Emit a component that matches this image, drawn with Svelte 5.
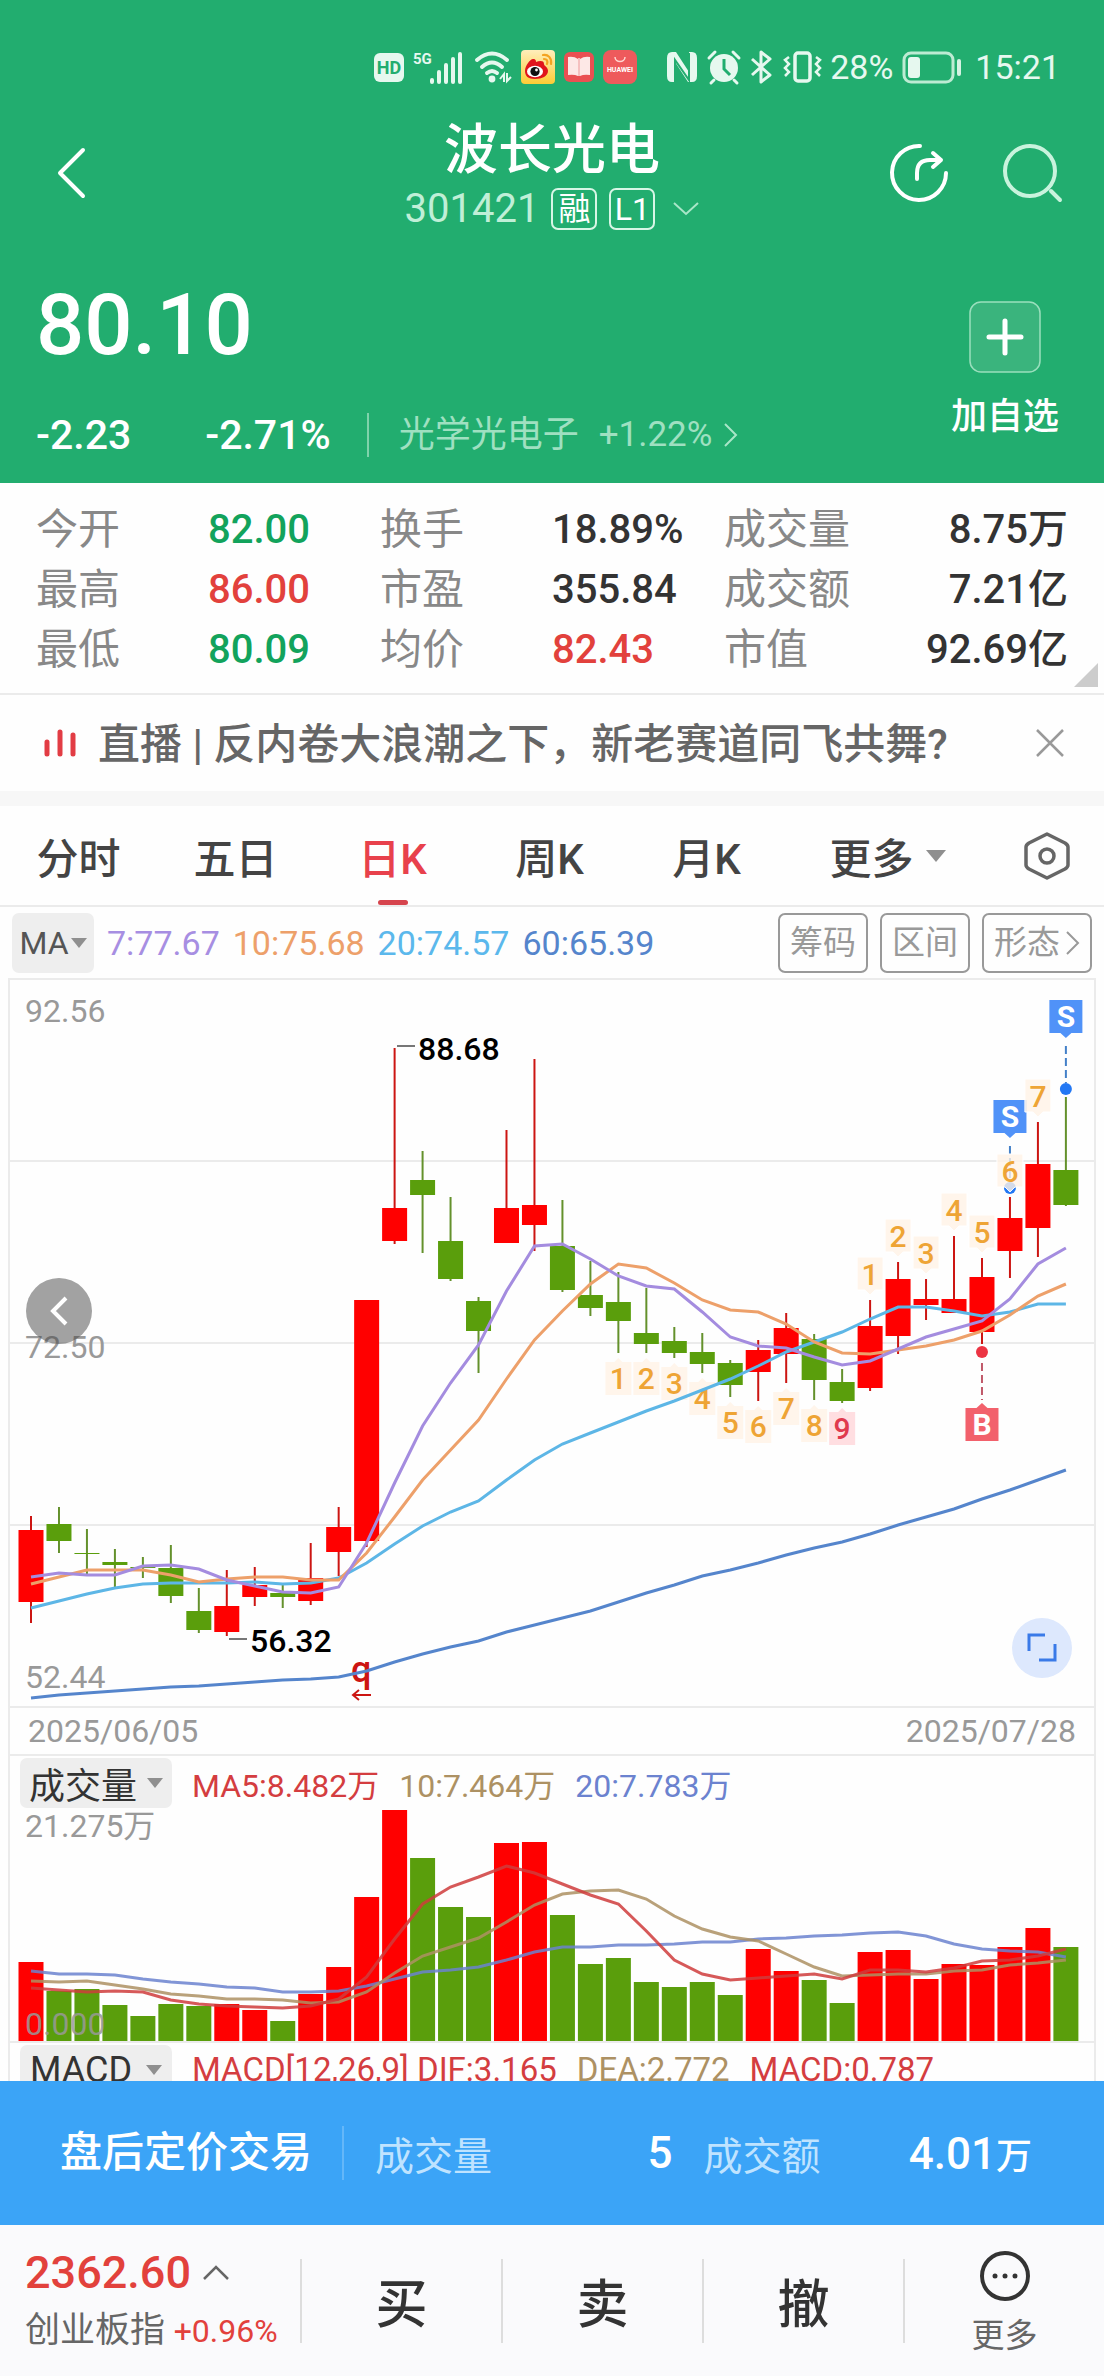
<script>
	const RED = '#ff0000'
	const GREEN = '#5a9e0c'
	const step = 27.97
	const xAt = (i) => 21 + i * step

	const stats = [
		[['今开', '82.00', 'down'], ['换手', '18.89%', ''], ['成交量', '8.75万', '']],
		[['最高', '86.00', 'up'], ['市盈', '355.84', ''], ['成交额', '7.21亿', '']],
		[['最低', '80.09', 'down'], ['均价', '82.43', 'up'], ['市值', '92.69亿', '']]
	]

	const tabs = ['分时', '五日', '日K', '周K', '月K']
	let activeTab = '日K'

	// high, body top, body bottom, low, 1 = up day
	const candles = [
		[536, 550, 622, 643, 1], [527, 544, 561, 573, 0], [549, 573, 574, 595, 0], [569, 582, 585, 608, 0],
		[577, 587, 588, 598, 0], [565, 588, 616, 623, 0], [608, 631, 650, 653, 0], [590, 626, 652, 656, 1],
		[587, 605, 617, 626, 1], [605, 613, 617, 628, 0], [563, 598, 621, 625, 1], [527, 547, 572, 596, 1],
		[320, 320, 561, 567, 1], [68, 228, 261, 264, 1], [171, 200, 215, 273, 0], [217, 261, 299, 301, 0],
		[317, 321, 351, 393, 0], [150, 228, 263, 263, 1], [79, 225, 245, 271, 1], [220, 266, 310, 312, 0],
		[281, 315, 328, 336, 0], [292, 322, 341, 373, 0], [308, 353, 364, 373, 0], [347, 361, 373, 378, 0],
		[353, 372, 384, 393, 0], [380, 383, 405, 417, 0], [360, 370, 392, 421, 1], [333, 348, 374, 403, 1],
		[354, 359, 400, 420, 0], [389, 402, 421, 423, 0], [320, 346, 408, 411, 1], [282, 299, 356, 374, 1],
		[299, 319, 325, 340, 1], [256, 319, 333, 333, 1], [278, 297, 352, 364, 1], [217, 238, 271, 298, 1],
		[142, 184, 248, 277, 1], [117, 190, 225, 226, 0]
	]

	const priceLines = [
		{ color: '#5585cc', data: [718, 715, 713, 711, 709, 707, 706, 704, 702, 700, 699, 697, 691, 682, 674, 667, 661, 652, 645, 638, 631, 622, 613, 605, 596, 590, 583, 575, 568, 562, 554, 545, 537, 529, 519, 510, 500, 490] },
		{ color: '#5db6e6', data: [628, 621, 614, 608, 604, 603, 603, 603, 602, 604, 603, 598, 583, 564, 546, 532, 521, 500, 480, 464, 453, 442, 431, 421, 410, 399, 386, 372, 362, 352, 339, 327, 327, 331, 336, 332, 324, 324] },
		{ color: '#eda06a', data: [604, 597, 590, 590, 590, 595, 602, 599, 597, 597, 600, 600, 573, 537, 500, 470, 440, 399, 360, 331, 304, 284, 288, 303, 320, 330, 332, 344, 362, 373, 374, 370, 366, 360, 351, 335, 316, 304] },
		{ color: '#a48cdf', data: [597, 593, 595, 595, 586, 585, 589, 600, 606, 612, 613, 607, 563, 503, 446, 403, 365, 311, 266, 264, 279, 296, 306, 309, 332, 357, 366, 368, 377, 385, 381, 369, 357, 349, 341, 319, 284, 268] }
	]

	const volumes = [79, 50, 52, 36, 25, 37, 35, 37, 31, 20, 47, 74, 144, 231, 183, 134, 124, 198, 199, 126, 77, 83, 59, 54, 59, 46, 92, 70, 61, 38, 89, 91, 62, 77, 76, 94, 113, 94]

	const volumeLines = [
		{ color: '#6b82cf', data: [70, 67, 67, 66, 62, 59, 57, 54, 53, 49, 49, 50, 55, 62, 69, 71, 74, 81, 89, 94, 94, 96, 96, 97, 99, 99, 102, 103, 105, 106, 108, 109, 105, 97, 92, 90, 89, 84] },
		{ color: '#ad9163', data: [60, 59, 60, 56, 52, 47, 45, 42, 42, 41, 38, 39, 49, 68, 85, 94, 103, 119, 136, 147, 150, 151, 142, 125, 112, 104, 100, 87, 74, 65, 66, 67, 67, 70, 71, 76, 78, 81] },
		{ color: '#cf3c3c', data: [53, 51, 49, 50, 49, 41, 37, 35, 34, 33, 35, 42, 64, 102, 137, 154, 164, 175, 168, 157, 146, 137, 110, 81, 67, 61, 63, 65, 67, 62, 71, 71, 69, 73, 80, 81, 85, 92] }
	]

	// nine-turn counts, drawn under the lows and over the highs
	const countsBelow = [1, 2, 3, 4, 5, 6, 7, 8, 9].map((n, k) => ({ n, i: 21 + k, y: candles[21 + k][3] + 9 }))
	const countsAbove = [1, 2, 3, 4, 5, 6, 7].map((n, k) => ({ n, i: 30 + k, y: candles[30 + k][0] - 43 }))

	const sells = [
		{ i: 35, y: 120, dot: 208 },
		{ i: 37, y: 20, dot: 109 }
	]

	const points = (data, base = 0) =>
		data.map((v, i) => `${xAt(i).toFixed(1)},${base ? base - v : v}`).join(' ')
</script>

<div class="app">
	<header>
		<div class="status">
			<svg width="30" height="34" viewBox="0 0 30 34">
				<rect y="3" width="30" height="29" rx="6" fill="#e6f8ef" />
				<text x="15" y="24" text-anchor="middle" font-size="18" font-weight="700" fill="#22ad6f">HD</text>
			</svg>
			<svg class="signal" width="52" height="34" viewBox="0 0 52 34">
				<text x="0" y="14" font-size="15" font-weight="700" fill="#e6f8ef">5G</text>
				<path d="M19 30v2M26 22v10M33 15v17M40 9v23M47 4v28" stroke="#e6f8ef" stroke-width="4" stroke-linecap="round" />
			</svg>
			<svg class="wifi" width="38" height="34" viewBox="0 0 38 34">
				<g fill="none" stroke="#e6f8ef" stroke-width="4" stroke-linecap="round">
					<path d="M3 10Q18-3 33 10" />
					<path d="M8 17Q18 8 28 17" />
					<path d="M13 23Q18 19 23 23" />
				</g>
				<circle cx="18" cy="29" r="3.4" fill="#e6f8ef" />
				<path d="M26 29l4-5v8M33 23v8l4-4" fill="none" stroke="#e6f8ef" stroke-width="2" />
			</svg>
			<svg width="34" height="34" viewBox="0 0 34 34">
				<defs>
					<linearGradient id="weibo" x2="0" y2="1">
						<stop stop-color="#ffeebb" />
						<stop offset="1" stop-color="#fdcc35" />
					</linearGradient>
				</defs>
				<rect width="34" height="34" rx="4" fill="url(#weibo)" />
				<path d="M12 9c3 0 3 2 3 3 3-1 8-2 8 2 0 2 4 3 4 7 0 5-6 8-13 8S4 26 4 21c0-5 5-12 8-12z" fill="#e0151c" />
				<ellipse cx="14" cy="21.500" rx="8" ry="5.800" fill="#fff" />
				<circle cx="14" cy="21.500" r="4.600" fill="#111" />
				<circle cx="15.500" cy="20" r="1.400" fill="#fff" />
				<path d="M22 5c5-1 9 3 8 9M23 9c3 0 4 2 3 5" fill="none" stroke="#f4a321" stroke-width="2.200" stroke-linecap="round" />
			</svg>
			<svg width="30" height="34" viewBox="0 0 30 34">
				<rect y="2" width="30" height="30" rx="6" fill="#ea5052" />
				<path d="M4 7q6-1 10 2v17q-4-2-10-1zM26 7q-6-1-10 2v17q4-2 10-1z" fill="#fde8e6" />
				<path d="M15 8v18" stroke="#f5c0bf" stroke-width="2" />
			</svg>
			<svg width="34" height="34" viewBox="0 0 34 34">
				<rect width="34" height="34" rx="8" fill="#ee5a5c" />
				<path d="M12 7c0 6 10 6 10 0" fill="none" stroke="#ffd5d0" stroke-width="1.500" />
				<text x="17" y="22" text-anchor="middle" font-size="7" font-weight="700" fill="#fff">HUAWEI</text>
			</svg>
			<svg class="nfc" width="32" height="34" viewBox="0 0 32 34">
				<path d="M6 2h4l13 20V2h3q5 0 5 6v18q0 6-5 6h-4L9 12v20H6q-5 0-5-6V8q0-6 5-6z" fill="#e6f8ef" />
				<path d="M9 32V10l14 20V3" fill="none" stroke="#22ad6f" stroke-width="2" />
			</svg>
			<svg width="34" height="34" viewBox="0 0 34 34">
				<circle cx="17" cy="18" r="14" fill="#e6f8ef" />
				<path d="M2 8l6-6M32 8l-6-6M7 30l-3 3M27 30l3 3" stroke="#e6f8ef" stroke-width="3" stroke-linecap="round" />
				<path d="M17 9v10l6 6" fill="none" stroke="#22ad6f" stroke-width="3" />
			</svg>
			<svg width="24" height="34" viewBox="0 0 24 34">
				<path d="M2 9l18 16-9 7V2l9 7L2 25" fill="none" stroke="#e6f8ef" stroke-width="3" stroke-linejoin="round" />
			</svg>
			<svg width="38" height="34" viewBox="0 0 38 34">
				<rect x="12" y="3" width="15" height="28" rx="3" fill="none" stroke="#e6f8ef" stroke-width="3.500" />
				<path d="M6 7l-4 3 4 4-4 4 4 4-4 4M33 7l4 3-4 4 4 4-4 4 4 4" fill="none" stroke="#e6f8ef" stroke-width="2.500" />
			</svg>
			<span>28%</span>
			<svg width="60" height="34" viewBox="0 0 60 34">
				<rect x="2" y="3" width="49" height="29" rx="7" fill="none" stroke="#bdebd3" stroke-width="3" />
				<rect x="6" y="7" width="12" height="21" rx="3" fill="#e6f8ef" />
				<path d="M57 11v13" stroke="#d5f3e3" stroke-width="4" stroke-linecap="round" />
			</svg>
			<span class="clock">15:21</span>
		</div>

		<div class="titlebar">
			<button class="icon back" aria-label="返回">
				<svg width="32" height="52" viewBox="0 0 32 52">
					<path d="M27 3L4 26l23 23" fill="none" stroke="#fff" stroke-width="4" stroke-linecap="round" stroke-linejoin="round" />
				</svg>
			</button>
			<div class="title">
				<h1>波长光电</h1>
				<button class="code">
					<span>301421</span>
					<i>融</i>
					<i>L1</i>
					<svg width="26" height="16" viewBox="0 0 26 16">
						<path d="M1 2l12 11L25 2" fill="none" stroke="#a9e6c8" stroke-width="2" />
					</svg>
				</button>
			</div>
			<div class="tools">
				<button class="icon" aria-label="分享">
					<svg width="60" height="60" viewBox="0 0 60 60" fill="none" stroke="#fff" stroke-width="4" stroke-linecap="round" stroke-linejoin="round">
						<path d="M31 3A27 27 0 1 0 57 30" />
						<path d="M28 36v-6q0-13 13-13h11M44 10l8 7-8 7" />
					</svg>
				</button>
				<button class="icon" aria-label="搜索">
					<svg width="60" height="60" viewBox="0 0 60 60" fill="none" stroke="#c9f3dd" stroke-width="4" stroke-linecap="round">
						<circle cx="28" cy="28" r="25" />
						<path d="M49 48l9 9" />
					</svg>
				</button>
			</div>
		</div>

		<div class="quote">
			<div>
				<strong>80.10</strong>
				<p>
					<span>-2.23</span>
					<span class="pct">-2.71%</span>
					<a href="#sector">光学光电子 <em>+1.22%</em>
						<svg width="14" height="24" viewBox="0 0 14 24">
							<path d="M1 1l11 11L1 23" fill="none" stroke="#a9e6c8" stroke-width="2" />
						</svg>
					</a>
				</p>
			</div>
			<button class="add">
				<svg width="72" height="72" viewBox="0 0 72 72">
					<rect x="1" y="1" width="70" height="70" rx="11" fill="#3ab47d" stroke="#9adfbd" stroke-width="1.500" />
					<path d="M36 20v32M20 36h32" stroke="#fff" stroke-width="5" stroke-linecap="round" />
				</svg>
				加自选
			</button>
		</div>
	</header>

	<main>
		<section class="stats">
			<table>
				<tbody>
					{#each stats as row}
						<tr>
							{#each row as [label, value, tone]}
								<th scope="row">{label}</th>
								<td class={tone}>{value}</td>
							{/each}
						</tr>
					{/each}
				</tbody>
			</table>
		</section>

		<section class="live">
			<svg width="32" height="30" viewBox="0 0 32 30">
				<path d="M3 14v12M16 4v22M29 7v19" stroke="#e23c44" stroke-width="5" stroke-linecap="round" />
			</svg>
			<a href="#live">直播 | 反内卷大浪潮之下，新老赛道同飞共舞?</a>
			<button class="icon" aria-label="关闭">
				<svg width="28" height="28" viewBox="0 0 28 28">
					<path d="M1 1l26 26M27 1L1 27" stroke="#999" stroke-width="2.500" />
				</svg>
			</button>
		</section>

		<nav class="tabs">
			{#each tabs as tab}
				<button class:active={tab === activeTab} on:click={() => (activeTab = tab)}>{tab}</button>
			{/each}
			<button class="more">更多<i class="caret"></i></button>
			<button class="icon" aria-label="设置">
				<svg width="46" height="48" viewBox="0 0 46 48" fill="none" stroke="#666" stroke-width="3.500" stroke-linejoin="round">
					<path d="M23 2l18 9q3 2 3 4v18q0 2-3 4l-18 9-18-9q-3-2-3-4V15q0-2 3-4z" />
					<circle cx="23" cy="24" r="7" />
				</svg>
			</button>
		</nav>

		<div class="ma">
			<button class="chip">MA<i class="caret"></i></button>
			<span class="ma7">7:77.67</span>
			<span class="ma10">10:75.68</span>
			<span class="ma20">20:74.57</span>
			<span class="ma60">60:65.39</span>
			<div class="modes">
				<button>筹码</button>
				<button>区间</button>
				<button>形态
					<svg width="14" height="24" viewBox="0 0 14 24">
						<path d="M1 1l11 11L1 23" fill="none" stroke="#999" stroke-width="2" />
					</svg>
				</button>
			</div>
		</div>

		<div class="charts">
			<div class="price">
				<svg viewBox="0 0 1084 726">
					<path d="M0 181h1084M0 363h1084M0 545h1084" stroke="#ebebeb" stroke-width="2" />
					<g class="scale">
						<text x="15" y="42">92.56</text>
						<text x="15" y="378">72.50</text>
						<text x="15" y="708">52.44</text>
					</g>

					{#each candles as [high, top, bottom, low, up], i}
						<path d="M{xAt(i)} {high}V{low}" stroke={up ? '#cc1512' : '#64912c'} stroke-width="2" />
						<rect x={xAt(i) - 12.5} y={top} width="25" height={bottom - top} fill={up ? RED : GREEN} />
					{/each}

					{#each countsBelow as { n, i, y }}
						<g class="count" class:nine={n === 9}>
							<path d="M{xAt(i) - 13} {y}h9l4-4 4 4h9v33h-26z" />
							<text x={xAt(i)} y={y + 27}>{n}</text>
						</g>
					{/each}

					<text class="mark" x="341" y="702">q</text>
					<path d="M361 715h-18M349 710l-6 5 6 5" fill="none" stroke="#cc1512" stroke-width="2" />

					{#each priceLines as line}
						<polyline points={points(line.data)} fill="none" stroke={line.color} stroke-width="3" />
					{/each}

					{#each sells as { i, y, dot }}
						<path d="M{xAt(i)} {y + 46}V{dot - 6}" stroke="#4480c8" stroke-width="2" stroke-dasharray="8 4" />
						<circle cx={xAt(i)} cy={dot} r="6" fill="#2378f4" />
						<path d="M{xAt(i) - 16.5} {y}h33v33h-11l-5.500 5-5.500-5h-11z" fill="#5092f8" />
						<text class="trade" x={xAt(i)} y={y + 27}>S</text>
					{/each}

					<path d="M{xAt(34)} 383V420" stroke="#c0596a" stroke-width="2" stroke-dasharray="8 4" />
					<circle cx={xAt(34)} cy="372" r="6" fill="#ec3443" />
					<path d="M{xAt(34) - 16.5} 428h11l5.500-5 5.500 5h11v33h-33z" fill="#f2616c" />
					<text class="trade" x={xAt(34)} y="455">B</text>

					{#each countsAbove as { n, i, y }}
						<g class="count above">
							<path d="M{xAt(i) - 13} {y}h26v33h-8l-5 5-5-5h-8z" />
							<text x={xAt(i)} y={y + 28}>{n}</text>
						</g>
					{/each}

					<path d="M387 66h18M219 659h18" stroke="#777" stroke-width="2" />
					<g class="extreme">
						<text x="408" y="80">88.68</text>
						<text x="240" y="672">56.32</text>
					</g>
				</svg>
				<button class="round prev" aria-label="向前">
					<svg width="20" height="32" viewBox="0 0 20 32">
						<path d="M17 3L4 16l13 13" fill="none" stroke="#fff" stroke-width="4" />
					</svg>
				</button>
				<button class="round expand" aria-label="全屏">
					<svg width="30" height="30" viewBox="0 0 30 30">
						<path d="M2 18V2h16M28 11v16H12" fill="none" stroke="#3a7ae8" stroke-width="3" />
					</svg>
				</button>
			</div>

			<div class="dates">
				<time>2025/06/05</time>
				<time>2025/07/28</time>
			</div>

			<div class="legend">
				<button class="chip">成交量<i class="caret"></i></button>
				<span class="red">MA5:8.482万</span>
				<span class="tan">10:7.464万</span>
				<span class="blue">20:7.783万</span>
			</div>
			<svg class="volume" viewBox="0 0 1084 232">
				{#each volumes as v, i}
					<rect x={xAt(i) - 12.5} y={232 - v} width="25" height={v} fill={candles[i][4] ? RED : GREEN} />
				{/each}
				{#each volumeLines as line}
					<polyline points={points(line.data, 232)} fill="none" stroke={line.color} stroke-opacity="0.85" stroke-width="3" />
				{/each}
				<g class="scale">
					<text x="15" y="28">21.275万</text>
					<text x="15" y="226" fill-opacity="0.85">0.000</text>
				</g>
			</svg>

			<div class="legend macd">
				<button class="chip">MACD<i class="caret"></i></button>
				<span class="red">MACD[12,26,9] DIF:3.165</span>
				<span class="tan">DEA:2.772</span>
				<span class="red">MACD:0.787</span>
			</div>
		</div>
	</main>

	<aside>
		<b>盘后定价交易</b>
		<span class="key">成交量</span>
		<span class="val">5</span>
		<span class="key">成交额</span>
		<span class="val">4.01<small>万</small></span>
	</aside>

	<footer>
		<button class="index">
			<span class="point">2362.60
				<svg width="26" height="16" viewBox="0 0 26 16">
					<path d="M1 14L13 2l12 12" fill="none" stroke="#666" stroke-width="2.500" />
				</svg>
			</span>
			<span class="name">创业板指 <em>+0.96%</em></span>
		</button>
		<button class="act">买</button>
		<button class="act">卖</button>
		<button class="act">撤</button>
		<button class="etc">
			<svg width="52" height="52" viewBox="0 0 52 52">
				<circle cx="26" cy="26" r="23" fill="none" stroke="#333" stroke-width="4" />
				<g fill="#333">
					<circle cx="16" cy="26" r="2.500" />
					<circle cx="26" cy="26" r="2.500" />
					<circle cx="36" cy="26" r="2.500" />
				</g>
			</svg>
			更多
		</button>
	</footer>
</div>

<style>
	:global(body) {
		background: #fefefe;
	}
	.app {
		display: flex;
		flex-direction: column;
		height: 100vh;
		font-family: Roboto, "Noto Sans CJK SC", sans-serif;
		color: #333;
	}
	svg {
		display: block;
		flex: none;
		overflow: visible;
	}
	button {
		padding: 0;
		border: 0;
		background: none;
		color: inherit;
		font: inherit;
		white-space: nowrap;
	}
	a {
		color: inherit;
		text-decoration: none;
	}
	i, em {
		font-style: normal;
	}
	.icon {
		display: flex;
	}
	.caret {
		border: 8px solid transparent;
		border-top: 10px solid #8f8f8f;
		border-bottom: 0;
	}

	/* header */
	header {
		flex: none;
		background: #22ad6f;
		color: #fff;
		padding-top: 48px;
		height: 435px;
	}
	.status {
		display: flex;
		align-items: center;
		justify-content: flex-end;
		gap: 9px;
		height: 38px;
		padding-right: 44px;
		font-size: 34px;
		line-height: 38px;
		color: #e6f8ef;
	}
	.status .nfc {
		margin-left: 20px;
	}
	.status .clock {
		margin-left: 4px;
	}
	.titlebar {
		display: grid;
		grid-template-columns: 1fr auto 1fr;
		align-items: center;
		padding: 29px 42px 0;
	}
	.back {
		margin-left: 14px;
	}
	.title {
		display: flex;
		flex-direction: column;
		align-items: center;
	}
	h1 {
		margin: 0;
		font-size: 54px;
		line-height: 72px;
		font-weight: 500;
	}
	.code {
		display: flex;
		align-items: center;
		gap: 12px;
		font-size: 40px;
		line-height: 44px;
		color: #c0efd7;
	}
	.code i {
		box-sizing: border-box;
		width: 46px;
		height: 42px;
		border: 2px solid #d8f6e6;
		border-radius: 7px;
		font-size: 32px;
		line-height: 38px;
		text-align: center;
		color: #fff;
	}
	.code svg {
		margin-left: 6px;
	}
	.tools {
		display: flex;
		justify-content: flex-end;
		gap: 53px;
	}
	.quote {
		display: flex;
		justify-content: space-between;
		padding: 50px 45px 0 36px;
	}
	.quote strong {
		display: block;
		font-size: 85px;
		line-height: 88px;
		font-weight: 500;
	}
	.quote p {
		display: flex;
		align-items: center;
		margin: 44px 0 0;
		font-size: 41px;
		line-height: 44px;
		font-weight: 500;
	}
	.quote .pct {
		margin-left: 74px;
	}
	.quote a {
		display: flex;
		align-items: center;
		margin-left: 36px;
		padding-left: 30px;
		border-left: 2px solid #7fd3ab;
		font-size: 36px;
		font-weight: 400;
		color: #9fe0c1;
	}
	.quote em {
		margin: 0 12px 0 20px;
		font-size: 35px;
	}
	.add {
		display: flex;
		flex-direction: column;
		align-items: center;
		gap: 22px;
		margin-top: 20px;
		height: 138px;
		font-size: 36px;
		line-height: 44px;
		font-weight: 500;
	}

	/* content */
	main {
		flex: 1;
		min-height: 0;
		overflow: hidden;
	}
	.stats {
		position: relative;
		padding: 17px 36px 13px;
		border-bottom: 2px solid #ebebeb;
	}
	.stats::after {
		content: '';
		position: absolute;
		right: 6px;
		bottom: 6px;
		border-left: 24px solid transparent;
		border-bottom: 24px solid #ccc;
	}
	table {
		width: 100%;
		table-layout: fixed;
		border-collapse: collapse;
		font-size: 40px;
		line-height: 60px;
	}
	th, td {
		padding: 0;
		text-align: left;
		font-weight: 400;
		white-space: nowrap;
	}
	th {
		font-size: 42px;
		color: #888;
	}
	td {
		font-weight: 500;
	}
	td:last-child {
		text-align: right;
	}
	.up {
		color: #e2413c;
	}
	.down {
		color: #12a35c;
	}
	.live {
		display: flex;
		align-items: center;
		height: 96px;
		padding: 0 40px 0 44px;
		border-bottom: 15px solid #f7f7f7;
		color: #666;
	}
	.live a {
		flex: 1;
		margin-left: 22px;
		padding-top: 4px;
		font-size: 42px;
		line-height: 60px;
		font-weight: 500;
		white-space: nowrap;
	}
	.tabs {
		display: flex;
		align-items: center;
		height: 99px;
		border-bottom: 2px solid #ebebeb;
		font-size: 42px;
		font-weight: 500;
		color: #444;
	}
	.tabs button {
		position: relative;
		flex: 157;
		height: 100%;
	}
	.tabs .active {
		color: #e8414c;
	}
	.tabs .active::after {
		content: '';
		position: absolute;
		left: 50%;
		bottom: 0;
		width: 30px;
		height: 5px;
		margin-left: -15px;
		border-radius: 3px;
		background: #d6444d;
	}
	.tabs .more {
		display: flex;
		align-items: center;
		justify-content: center;
		gap: 12px;
		flex: 205;
	}
	.tabs .more .caret {
		border-width: 12px 10px 0;
	}
	.tabs .icon {
		flex: 114;
		align-items: center;
		justify-content: center;
	}
	.ma {
		display: flex;
		align-items: center;
		gap: 13px;
		height: 71px;
		padding: 0 12px;
		font-size: 34px;
		line-height: 40px;
	}
	.chip {
		display: flex;
		align-items: center;
		justify-content: center;
		border-radius: 7px;
		background: #eee;
	}
	.ma .chip {
		gap: 2px;
		width: 82px;
		height: 60px;
		font-size: 32px;
		color: #555;
	}
	.ma7 { color: #a78ee2; }
	.ma10 { color: #eda06a; }
	.ma20 { color: #5bb8ec; }
	.ma60 { color: #5585cc; }
	.modes {
		display: flex;
		gap: 12px;
		margin-left: auto;
	}
	.modes button {
		display: flex;
		align-items: center;
		gap: 6px;
		height: 60px;
		padding: 0 10px;
		border: 2px solid #999;
		border-radius: 7px;
		box-sizing: border-box;
		font-size: 33px;
		color: #999;
	}
	.charts {
		margin: 0 8px;
		border: 2px solid #ebebeb;
		border-bottom: 0;
	}
	.price {
		position: relative;
	}
	.price > svg, .volume {
		width: 100%;
	}
	.scale {
		font-size: 32px;
		fill: #999;
	}
	.extreme {
		font-size: 32px;
		font-weight: 500;
		fill: #000;
	}
	.mark {
		font-size: 36px;
		font-weight: 500;
		fill: #cc1512;
	}
	.trade {
		font-size: 30px;
		font-weight: 700;
		fill: #fff;
		text-anchor: middle;
	}
	.count {
		font-size: 30px;
		font-weight: 500;
		text-anchor: middle;
	}
	.count path {
		fill: #fff3e6;
		fill-opacity: 0.8;
	}
	.above path {
		stroke: #fff;
		stroke-width: 1;
	}
	.count text {
		fill: #eea435;
	}
	.nine path {
		fill: #ffd6da;
	}
	.nine text {
		fill: #e0394d;
	}
	.round {
		position: absolute;
		display: flex;
		align-items: center;
		justify-content: center;
		border-radius: 50%;
	}
	.prev {
		left: 16px;
		top: 41%;
		width: 66px;
		height: 66px;
		background: rgba(70, 70, 70, 0.5);
	}
	.expand {
		right: 22px;
		bottom: 28px;
		width: 60px;
		height: 60px;
		background: #dde8fd;
	}
	.dates {
		display: flex;
		justify-content: space-between;
		padding: 0 18px;
		border: solid #ebebeb;
		border-width: 2px 0;
		font-size: 32px;
		line-height: 46px;
		color: #999;
	}
	.legend {
		display: flex;
		align-items: center;
		gap: 20px;
		height: 53px;
		padding-left: 10px;
		font-size: 32px;
		white-space: nowrap;
	}
	.legend .chip {
		gap: 10px;
		width: 152px;
		height: 50px;
		font-size: 36px;
		color: #333;
	}
	.macd {
		border-top: 2px solid #ebebeb;
		font-size: 33px;
	}
	.macd .chip {
		gap: 14px;
	}
	.red { color: #d43d40; }
	.tan { color: #ad9163; }
	.blue { color: #6b82cf; }

	/* after-hours bar */
	aside {
		flex: none;
		display: flex;
		align-items: center;
		height: 144px;
		padding: 0 72px 0 60px;
		background: #3ba4f7;
		color: #fff;
		font-size: 39px;
	}
	aside b {
		padding-right: 30px;
		border-right: 2px solid #64b7f9;
		font-size: 42px;
		line-height: 54px;
		font-weight: 500;
	}
	.key {
		margin-left: 31px;
		color: #bfe3ff;
	}
	.val {
		flex: 180;
		font-size: 44px;
		font-weight: 500;
		text-align: right;
	}
	.val:last-child {
		flex: 211;
	}
	.val small {
		font-size: 36px;
	}

	footer {
		flex: none;
		display: flex;
		align-items: center;
		height: 151px;
		background: #fafafc;
	}
	footer button {
		box-sizing: border-box;
		flex: 202;
		height: 84px;
		border-right: 2px solid #ddd;
	}
	footer .index {
		display: flex;
		flex-direction: column;
		justify-content: center;
		gap: 8px;
		flex: none;
		width: 302px;
		padding-left: 25px;
		text-align: left;
	}
	.point {
		display: flex;
		align-items: center;
		gap: 12px;
		font-size: 45px;
		line-height: 52px;
		font-weight: 500;
		color: #e2413c;
	}
	.name {
		font-size: 35px;
		line-height: 48px;
		color: #666;
	}
	.name em {
		font-size: 32px;
		color: #e2413c;
	}
	.act {
		font-size: 52px;
		font-weight: 500;
	}
	footer .etc {
		display: flex;
		flex-direction: column;
		align-items: center;
		justify-content: center;
		gap: 12px;
		padding-top: 6px;
		border: 0;
		font-size: 33px;
		line-height: 44px;
		color: #666;
	}
</style>
